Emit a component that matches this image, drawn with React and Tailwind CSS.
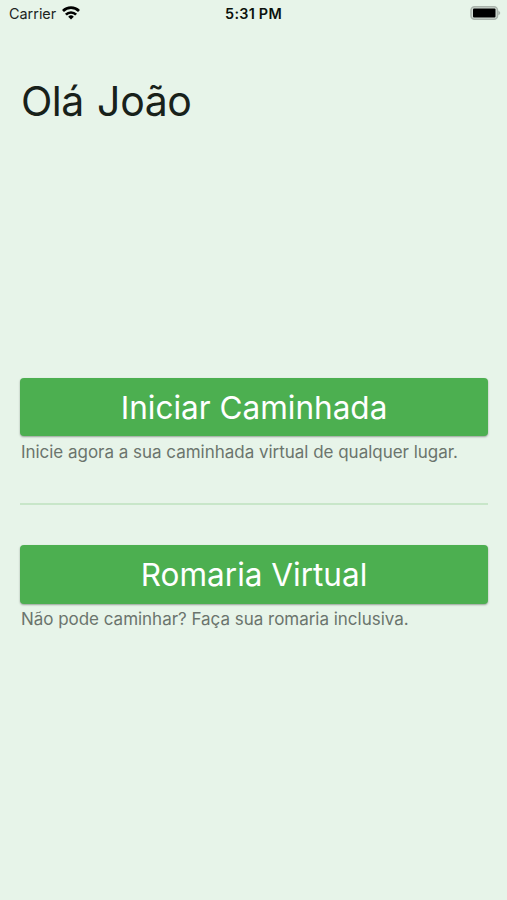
import React from 'react';

function StatusBar() {
  return (
    <header className="flex h-7 items-center px-[9px] text-black">
      <div className="flex flex-1 items-center gap-1.5">
        <span className="text-[14.4px] leading-7 text-[#1c241e]">Carrier</span>
        <svg className="-mt-0.5 h-[14px] w-[18px]" viewBox="0 0 18 14" fill="none" stroke="currentColor" strokeWidth="2.7">
          <path d="M1 5a11.3 11.3 0 0 1 16 0" />
          <path d="M3.9 8.6a7.2 7.2 0 0 1 10.2 0" />
          <path d="M9 13.5l-2.8-2.8a4 4 0 0 1 5.6 0z" fill="currentColor" stroke="none" />
        </svg>
      </div>
      <span className="text-[14.4px] font-semibold leading-7 tracking-[0.25px] text-[#0c120d]">5:31 PM</span>
      <div className="flex flex-1 justify-end">
        <svg className="-mr-[3px] -mt-0.5 h-[14px] w-[31px]" viewBox="0 0 31 14">
          <rect x="1" y="0.75" width="26.5" height="12.5" rx="3.5" fill="#d3ddd5" stroke="#a9b3ab" strokeWidth="1.5" />
          <rect x="3" y="2.5" width="22.5" height="9" rx="1" fill="#000" />
          <path d="M28.3 4.8v4.4q2-.7 2-2.2t-2-2.2z" fill="#a9b3ab" />
        </svg>
      </div>
    </header>
  );
}

function Action({ title, description }) {
  return (
    <section>
      <button className="flex h-[58.6px] w-full items-center justify-center rounded-[4px] bg-[#4caf50] pt-0.5 text-white shadow-[0_1px_2px_rgba(0,0,0,0.35)]">
        <span className="whitespace-nowrap text-[31.5px] leading-10">{title}</span>
      </button>
      <p className="mt-[3.4px] whitespace-nowrap pl-[0.5px] text-[17px] leading-6 tracking-[-0.02px] text-[#6b746d]">
        {description}
      </p>
    </section>
  );
}

export default function App() {
  return (
    <div className="flex h-[900px] w-[507px] flex-col bg-[#e7f4e9] font-['Inter','Liberation_Sans',sans-serif]">
      <StatusBar />
      <main className="flex flex-col pl-[20.4px] pr-[19.3px]">
        <h1 className="mt-12 h-[50px] whitespace-nowrap pl-[0.5px] text-[41px] leading-[50px] tracking-[-0.4px] text-[#18211a] [word-spacing:2px]">
          Olá João
        </h1>
        <div className="mt-[251.7px]">
          <Action
            title="Iniciar Caminhada"
            description="Inicie agora a sua caminhada virtual de qualquer lugar."
          />
        </div>
        <hr className="mt-[39.3px] h-[2px] border-0 bg-[#c8e6c9]" />
        <div className="mt-10">
          <Action
            title="Romaria Virtual"
            description="Não pode caminhar? Faça sua romaria inclusiva."
          />
        </div>
      </main>
    </div>
  );
}
